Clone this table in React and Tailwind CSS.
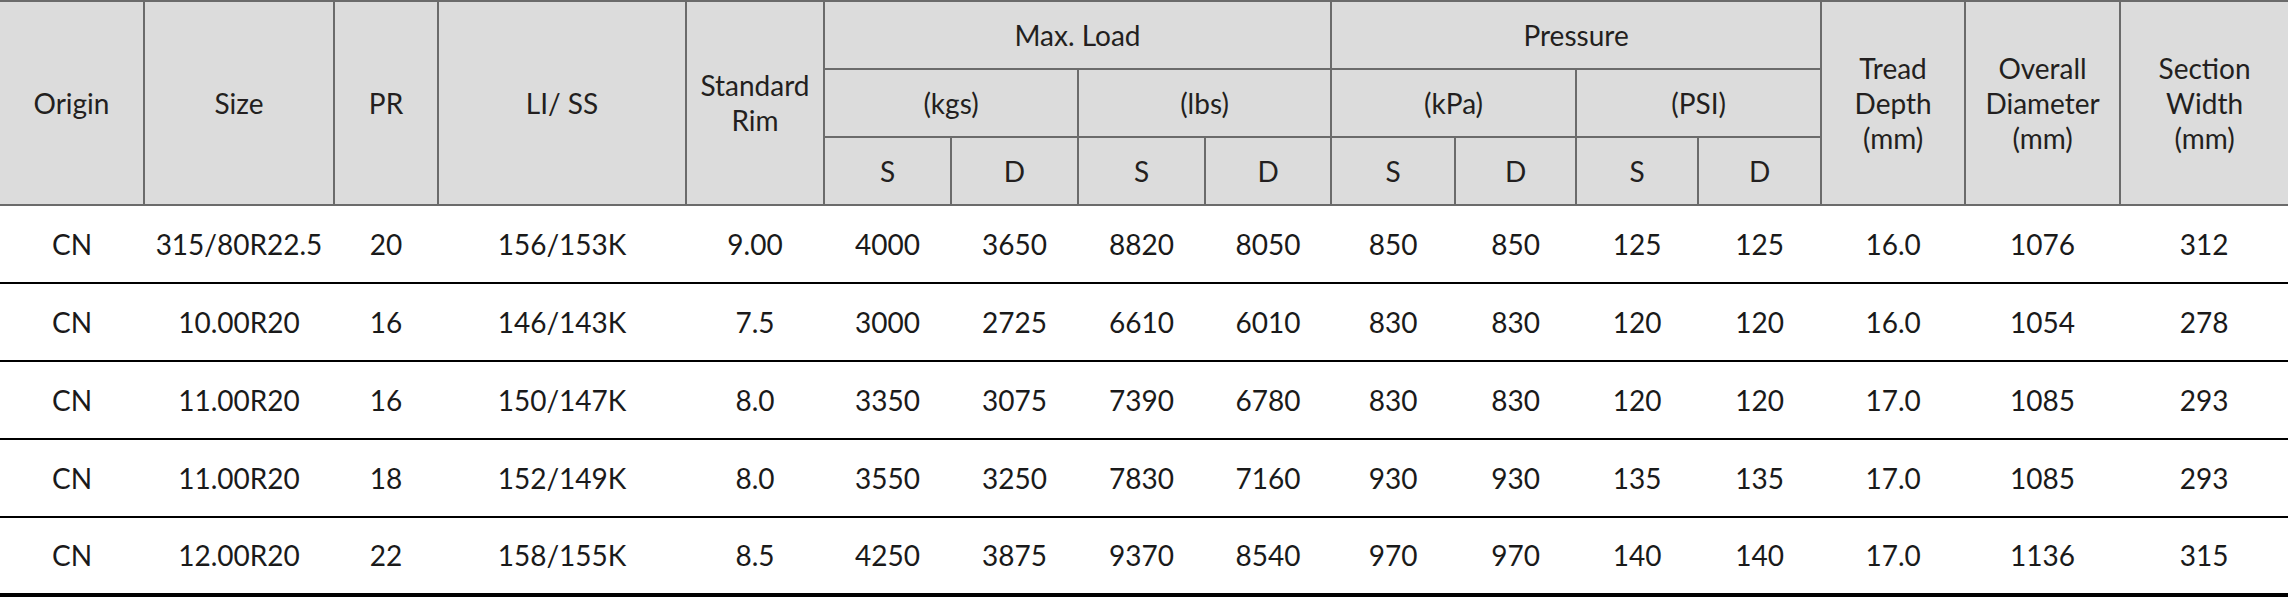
const ROWS = [
  ['CN', '315/80R22.5', '20', '156/153K', '9.00', '4000', '3650', '8820', '8050', '850', '850', '125', '125', '16.0', '1076', '312'],
  ['CN', '10.00R20', '16', '146/143K', '7.5', '3000', '2725', '6610', '6010', '830', '830', '120', '120', '16.0', '1054', '278'],
  ['CN', '11.00R20', '16', '150/147K', '8.0', '3350', '3075', '7390', '6780', '830', '830', '120', '120', '17.0', '1085', '293'],
  ['CN', '11.00R20', '18', '152/149K', '8.0', '3550', '3250', '7830', '7160', '930', '930', '135', '135', '17.0', '1085', '293'],
  ['CN', '12.00R20', '22', '158/155K', '8.5', '4250', '3875', '9370', '8540', '970', '970', '140', '140', '17.0', '1136', '315'],
];

const WIDTHS = ['w-[144px]', 'w-[190px]', 'w-[104px]', 'w-[248px]', 'w-[138px]',
  'w-[127px]', 'w-[127px]', 'w-[127px]', 'w-[126px]', 'w-[124px]', 'w-[121px]', 'w-[122px]', 'w-[123px]',
  'w-[144px]', 'w-[155px]', 'w-[168px]'];

const th = 'bg-[#dcdcdc] border-2 border-[#6b6b6b] font-normal text-center align-middle';

export default function App() {
  return (
    <div className="w-[2288px] bg-white text-[#231f20] font-['Lato','Liberation_Sans',sans-serif] text-[28px] leading-[35px]">
      <table className="w-full table-fixed border-collapse">
        <colgroup>
          {WIDTHS.map((w, i) => <col key={i} className={w} />)}
        </colgroup>
        <thead className="border-t border-[#6b6b6b]">
          <tr className="h-[68px]">
            <th rowSpan={3} className={`${th} border-l-0`}>Origin</th>
            <th rowSpan={3} className={th}>Size</th>
            <th rowSpan={3} className={th}>PR</th>
            <th rowSpan={3} className={th}>LI/ SS</th>
            <th rowSpan={3} className={th}>Standard<br />Rim</th>
            <th colSpan={4} className={th}>Max. Load</th>
            <th colSpan={4} className={th}>Pressure</th>
            <th rowSpan={3} className={th}>Tread<br />Depth<br />(mm)</th>
            <th rowSpan={3} className={th}>Overall<br />Diameter<br />(mm)</th>
            <th rowSpan={3} className={`${th} border-r-0`}>Section<br />Width<br />(mm)</th>
          </tr>
          <tr className="h-[68px]">
            <th colSpan={2} className={th}>(kgs)</th>
            <th colSpan={2} className={th}>(lbs)</th>
            <th colSpan={2} className={th}>(kPa)</th>
            <th colSpan={2} className={th}>(PSI)</th>
          </tr>
          <tr className="h-[68px]">
            {['S', 'D', 'S', 'D', 'S', 'D', 'S', 'D'].map((t, i) => (
              <th key={i} className={th}>{t}</th>
            ))}
          </tr>
        </thead>
        <tbody>
          {ROWS.map((row, r) => (
            <tr key={r} className={`h-[78px] ${r === ROWS.length - 1 ? 'border-b-4' : 'border-b-2'} border-black`}>
              {row.map((c, i) => (
                <td key={i} className="text-center align-middle text-[#1a1a1a]">{c}</td>
              ))}
            </tr>
          ))}
        </tbody>
      </table>
    </div>
  );
}
